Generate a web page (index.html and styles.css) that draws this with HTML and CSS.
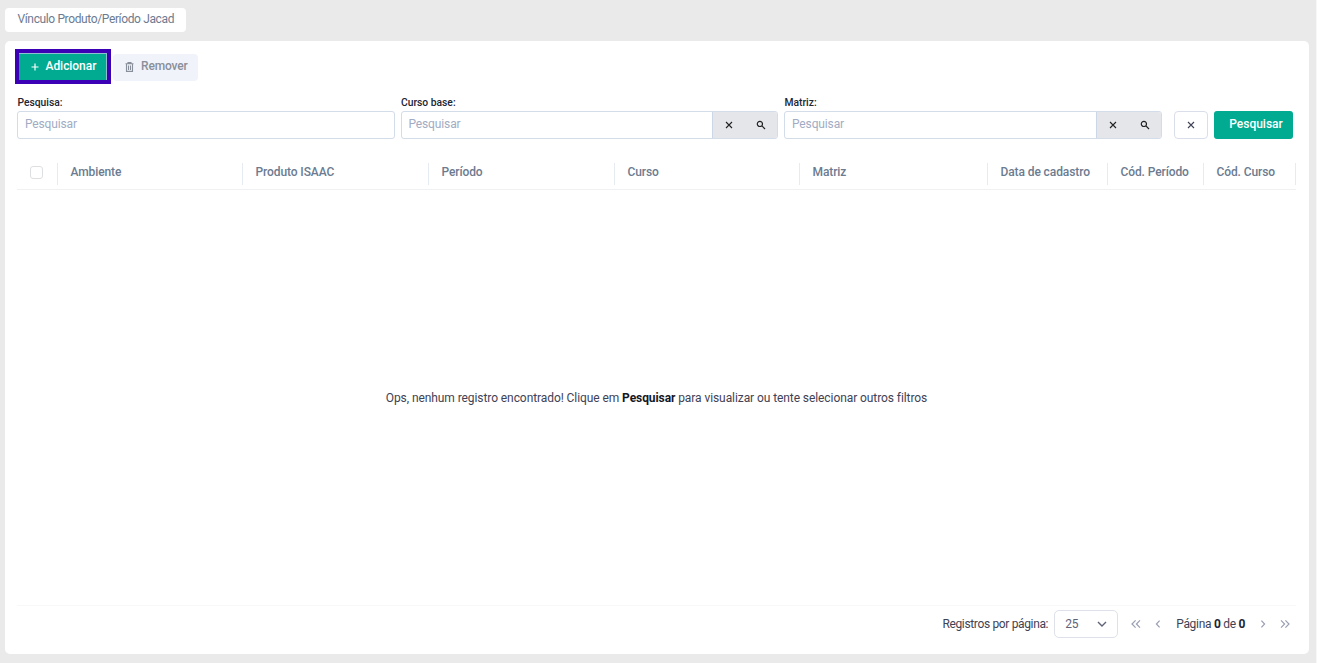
FILE: index.html
```html
<!DOCTYPE html>
<html lang="pt-BR">
<head>
<meta charset="utf-8">
<title>Vínculo Produto/Período Jacad</title>
<link rel="stylesheet" href="styles.css">
</head>
<body>
<svg class="defs" aria-hidden="true">
  <symbol id="close" viewBox="0 0 8 8"><path d="M1 1l6 6M7 1L1 7"/></symbol>
  <symbol id="search" viewBox="0 0 10 10"><circle cx="3.9" cy="3.9" r="2.6"/><path d="M5.9 5.9L9 9"/></symbol>
  <symbol id="chevron" viewBox="0 0 6 10"><path d="M4.6 1.6L1.4 5l3.2 3.4"/></symbol>
  <symbol id="double" viewBox="0 0 10 10"><path d="M4.6 1.4L1 5l3.6 3.6M9 1.4L5.4 5 9 8.6"/></symbol>
</svg>
<nav class="tab">Vínculo Produto/Período Jacad</nav>
<main class="panel">
  <div class="toolbar">
    <button class="btn add"><svg class="plus" viewBox="0 0 8 8"><path d="M4 .5v7M.5 4h7"/></svg><span>Adicionar</span></button>
    <button class="btn remove"><svg class="trash" viewBox="0 0 9 10"><path d="M.5 1.7h8M3 1.5V.6h3v.9M1.5 2v7.4h6V2M3.5 3.5v4.5M5.5 3.5v4.5"/></svg><span>Remover</span></button>
  </div>
  <form class="filters">
    <div class="field"><label>Pesquisa:</label><div class="input"><span>Pesquisar</span></div></div>
    <div class="field"><label>Curso base:</label><div class="input"><span>Pesquisar</span><div class="addon"><svg class="x"><use href="#close"/></svg><svg class="lens"><use href="#search"/></svg></div></div></div>
    <div class="field"><label>Matriz:</label><div class="input"><span>Pesquisar</span><div class="addon"><svg class="x"><use href="#close"/></svg><svg class="lens"><use href="#search"/></svg></div></div></div>
    <button type="button" class="clear"><svg class="x"><use href="#close"/></svg></button>
    <button type="button" class="submit">Pesquisar</button>
  </form>
  <div class="thead">
    <div class="check"><i class="box"></i></div>
    <div>Ambiente</div><div>Produto ISAAC</div><div>Período</div><div>Curso</div><div>Matriz</div><div>Data de cadastro</div><div>Cód. Período</div><div>Cód. Curso</div>
  </div>
  <div class="empty"><p>Ops, nenhum registro encontrado! Clique em <b>Pesquisar</b> para visualizar ou tente selecionar outros filtros</p></div>
  <footer class="pager">
    <span class="per">Registros por página:</span>
    <div class="select"><span>25</span><svg class="down" viewBox="0 0 10 6"><path d="M1 1l4 4 4-4"/></svg></div>
    <svg class="nav first"><use href="#double"/></svg>
    <svg class="nav prev"><use href="#chevron"/></svg>
    <span class="page">Página <b>0</b> de <b>0</b></span>
    <svg class="nav next"><use href="#chevron"/></svg>
    <svg class="nav last"><use href="#double"/></svg>
  </footer>
</main>
</body>
</html>
```
FILE: styles.css
```css
* { box-sizing: border-box; }
body {
  margin: 0; height: 663px; padding: 8px 7px 8px 5px;
  display: flex; flex-direction: column; align-items: flex-start; gap: 9px;
  overflow: hidden; background: #eaeaea; border-right: 1px solid #f7f7f7;
  font: 12px/16px Roboto, sans-serif; color: #3f4254;
}
.defs { position: absolute; width: 0; height: 0; }
svg { fill: none; stroke: currentColor; flex: none; }
button { font: inherit; letter-spacing: inherit; border: 0; padding: 0; }
.tab { height: 24px; width: 181px; padding: 0 0 2px 12.5px; display: flex; align-items: center; white-space: nowrap; background: #fff; border-radius: 4px; color: #6c7b90; letter-spacing: -.37px; }
.panel { width: 1304px; height: 613px; padding: 8px 13px 0 10px; background: #fff; border-radius: 5px; display: flex; flex-direction: column; }
.toolbar { display: flex; gap: 2px; height: 35px; align-items: center; }
.btn { display: flex; align-items: center; font-weight: 500; letter-spacing: -.05px; }
.btn span { padding-bottom: 1px; }
.add { width: 96px; height: 35px; border: 4px solid #3c00b5; background: #00ab91; color: #fff; padding-left: 11.5px; gap: 7px; box-shadow: inset -1px 1px 0 #8fc0cf; }
.plus { width: 8px; height: 8px; stroke-width: 1.2; }
.remove { width: 85px; height: 27px; border-radius: 4px; background: #f0f3f9; color: #898f9a; padding-left: 12px; gap: 7px; margin-top: 1px; letter-spacing: -.15px; }
.remove span { padding-bottom: 2px; }
.trash { width: 9px; height: 10px; stroke-width: 1.1; }
.filters { display: flex; align-items: flex-end; margin: 11px 3px 0 2.4px; height: 44px; }
.field { width: 377.5px; margin-right: 6.1px; }
.field label { display: block; height: 16px; font-size: 10.3px; font-weight: 500; color: #212534; line-height: 16px; }
.input { height: 28px; border: 1px solid #d3dce9; border-radius: 3px; display: flex; align-items: stretch; justify-content: space-between; color: #a1acc4; letter-spacing: -.13px; overflow: hidden; }
.input span { padding: 4px 0 0 6.5px; }
.addon { width: 65px; background: #e5e6ea; border-left: 1px solid #cbd7e6; display: flex; align-items: center; padding: 0 11px 0 12px; justify-content: space-between; color: #222; }
.x { width: 8px; height: 8px; stroke-width: 1.1; }
.lens { width: 10px; height: 10px; stroke-width: 1.2; }
.clear { width: 34px; height: 28px; margin: 0 6px 0 6px; border: 1px solid #d9deea; border-radius: 4px; background: #fff; display: flex; align-items: center; justify-content: center; color: #3f4254; }
.submit { width: 79px; height: 28px; border-radius: 3px; background: #00ab91; color: #fff; font-weight: 500; letter-spacing: -.02px; padding-left: 5px; padding-bottom: 2px; }
.thead { display: grid; grid-template-columns: 41px 185px 186px 186px 185px 188px 120px 96px 92px; margin: 18px 0 0 2px; padding: 6px 0 5px; height: 33px; border-bottom: 1px solid #f0f1f3; font-weight: 500; letter-spacing: -.1px; color: #6c7b90; white-space: nowrap; }
.thead > div { height: 22px; padding: 1px 0 0 12.5px; border-right: 1px solid #e6eaf1; }
.thead .check { padding: 3px 0 0 13px; }
.box { display: block; width: 13px; height: 13px; border: 1px solid #dedfe1; border-radius: 3px; }
.empty { flex: 1; display: flex; justify-content: center; align-items: center; letter-spacing: -.08px; padding-left: 2px; }
.empty p { margin: 0; }
.empty b { color: #15171f; }
.pager { margin: 0 0 0 2px; height: 49px; padding-bottom: 12px; border-top: 1px solid #f8f8f9; display: flex; align-items: center; justify-content: flex-end; padding-right: 6px; letter-spacing: -.35px; }
.page { letter-spacing: -.3px; }
.pager b { color: #212534; }
.select { width: 64px; height: 28px; border: 1px solid #dfe1ea; border-radius: 5px; margin: 0 13px 0 6px; padding: 0 10px; display: flex; align-items: center; justify-content: space-between; color: #5e6278; letter-spacing: -.1px; }
.select span { padding-bottom: 1px; }
.down { width: 10px; height: 6px; stroke-width: 1.4; }
.nav { color: #9a9fb2; stroke-width: 1.2; height: 10px; }
.first, .last { width: 10px; }
.prev, .next { width: 6px; }
.prev { margin: 0 15px 0 14px; }
.next { margin: 0 14px 0 15px; }
.next, .last { transform: rotate(180deg); }
```
